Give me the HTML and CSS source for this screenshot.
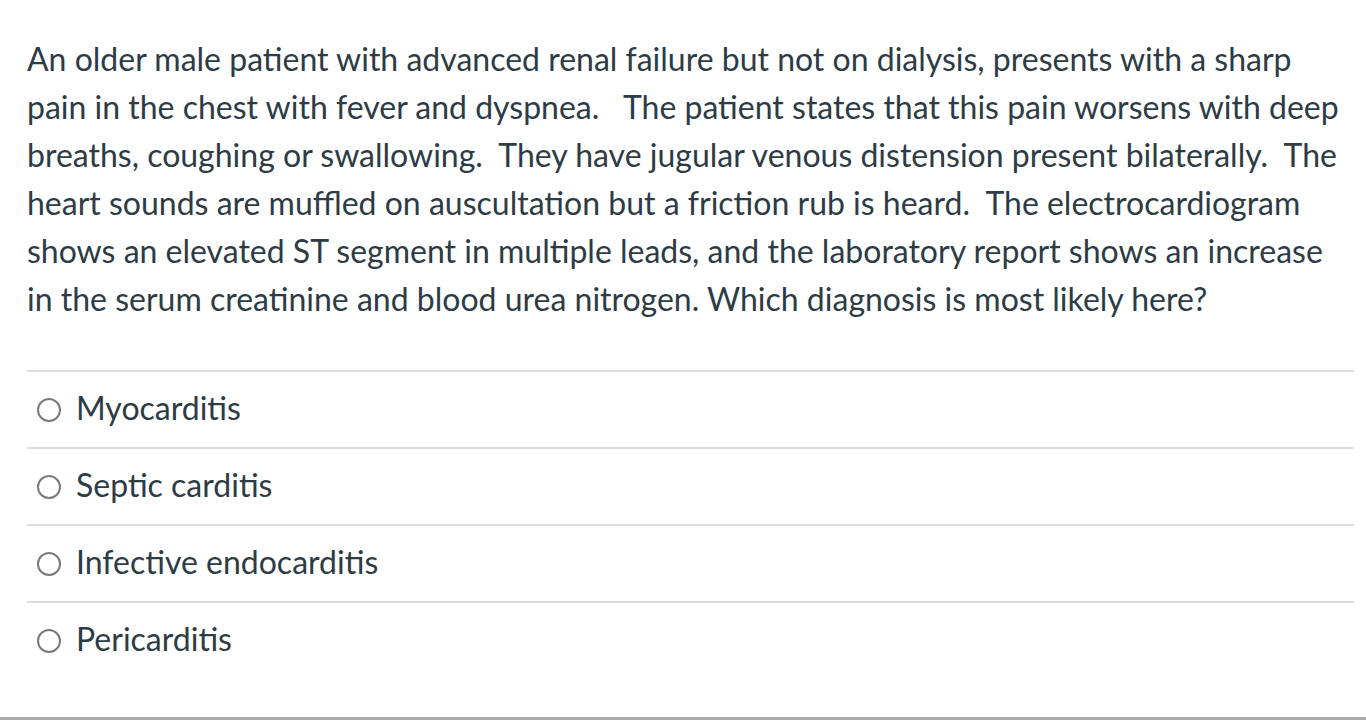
FILE: index.html
```html
<!DOCTYPE html>
<html lang="en">
<head>
<meta charset="utf-8">
<title>Question</title>
<link rel="stylesheet" href="styles.css">
</head>
<body>
<div class="page">
  <div class="question">
    <p class="question-text">An older male patient with advanced renal failure but not on dialysis, presents with a sharp pain in the chest with fever and dyspnea.&nbsp; &nbsp;The patient states that this pain worsens with deep breaths, coughing or swallowing.&nbsp; They have jugular venous distension present bilaterally.&nbsp; The heart sounds are muffled on auscultation but a friction rub is heard.&nbsp; The electrocardiogram shows an elevated ST segment in multiple leads, and the laboratory report shows an increase in the serum creatinine and blood urea nitrogen. Which diagnosis is most likely here?</p>
    <div class="answers">
      <label class="answer"><span class="radio"></span><span class="answer-text">Myocarditis</span></label>
      <label class="answer"><span class="radio"></span><span class="answer-text">Septic carditis</span></label>
      <label class="answer"><span class="radio"></span><span class="answer-text">Infective endocarditis</span></label>
      <label class="answer"><span class="radio"></span><span class="answer-text">Pericarditis</span></label>
    </div>
  </div>
  <div class="footer-rule"></div>
</div>
</body>
</html>
```

FILE: styles.css
```css
html, body {
  margin: 0;
  padding: 0;
  background: #ffffff;
}
body {
  font-family: Lato, "Open Sans", sans-serif;
  color: #2d3b45;
  font-size: 32px;
  line-height: 48px;
}
.page {
  width: 1366px;
  height: 720px;
  display: flex;
  flex-direction: column;
}
.question {
  flex: 1;
  padding: 35px 12px 0 27px;
}
.question-text {
  margin: 0 0 47px 0;
}
.answers {
  display: flex;
  flex-direction: column;
}
.answer {
  display: flex;
  align-items: center;
  gap: 15px;
  height: 75px;
  border-top: 2px solid #dddddd;
  padding-left: 10px;
}
.radio {
  width: 24px;
  height: 24px;
  border: 2px solid #7a7a7a;
  border-radius: 50%;
  box-sizing: border-box;
  flex: none;
}
.answer-text {
  line-height: 48px;
  margin-bottom: 4px;
}
.footer-rule {
  height: 3px;
  background: #a9a9a9;
}
```
